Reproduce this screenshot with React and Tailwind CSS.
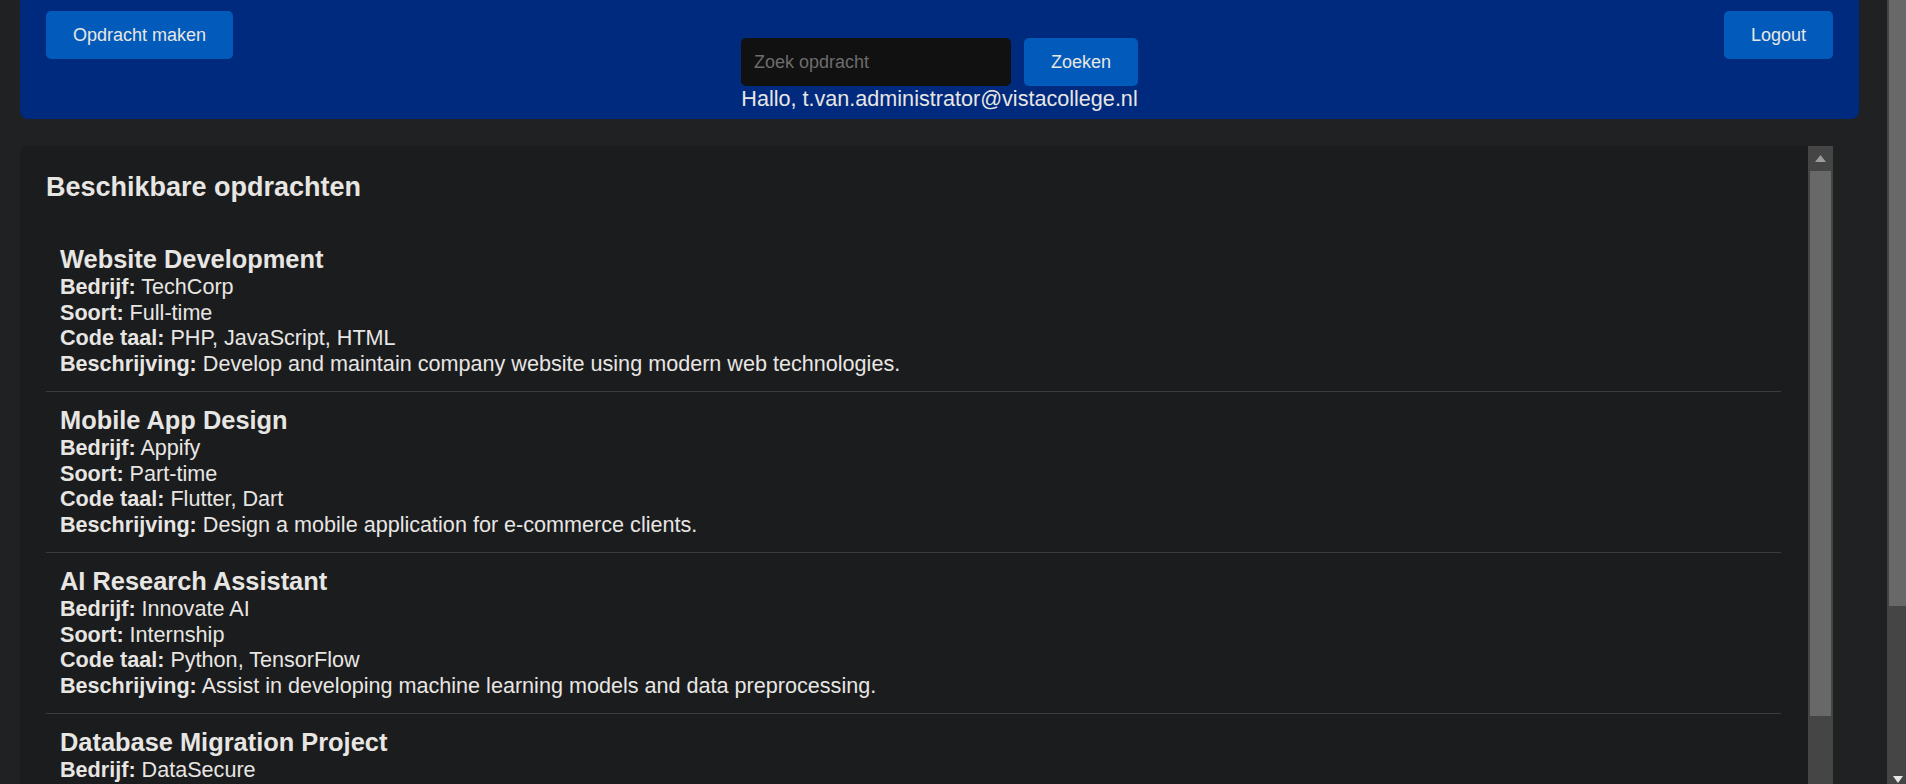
import React from 'react';

const opdrachten = [
  {
    titel: 'Website Development',
    bedrijf: 'TechCorp',
    soort: 'Full-time',
    taal: 'PHP, JavaScript, HTML',
    beschrijving: 'Develop and maintain company website using modern web technologies.',
  },
  {
    titel: 'Mobile App Design',
    bedrijf: 'Appify',
    soort: 'Part-time',
    taal: 'Flutter, Dart',
    beschrijving: 'Design a mobile application for e-commerce clients.',
  },
  {
    titel: 'AI Research Assistant',
    bedrijf: 'Innovate AI',
    soort: 'Internship',
    taal: 'Python, TensorFlow',
    beschrijving: 'Assist in developing machine learning models and data preprocessing.',
  },
  {
    titel: 'Database Migration Project',
    bedrijf: 'DataSecure',
    soort: 'Full-time',
    taal: 'SQL, PostgreSQL',
    beschrijving: 'Migrate legacy databases to a modern cloud environment.',
  },
];

function Field({ label, children }) {
  return (
    <p className="leading-[25.5px]">
      <strong className="font-bold">{label}:</strong> {children}
    </p>
  );
}

export default function App() {
  return (
    <div className="flex h-[784px] w-[1906px] overflow-hidden bg-[#1f2122] font-['Liberation_Sans',Arial,sans-serif] text-[21.6px] text-[#e8e6e3]">
      <div className="flex w-[1887px] flex-col pl-5">
        {/* Header */}
        <header className="grid h-[119px] w-[1839px] shrink-0 grid-cols-[1fr_auto_1fr] rounded-b-lg bg-[#002a7e] px-[26px] pt-[11px]">
          <div>
            <button className="h-12 rounded-[5px] bg-[#025bbb] px-[27px] text-[18px] text-[#e8e6e3]">
              Opdracht maken
            </button>
          </div>

          <div className="mt-[27px] flex flex-col items-center">
            <div className="flex gap-[13px]">
              <input
                type="text"
                placeholder="Zoek opdracht"
                className="h-12 w-[270px] rounded-[5px] bg-[#111111] pl-[13px] text-[18px] text-[#e8e6e3] outline-none placeholder:text-[#6d6d6d]"
              />
              <button className="h-12 w-[114px] rounded-[5px] bg-[#025bbb] text-[18px] text-[#e8e6e3]">
                Zoeken
              </button>
            </div>
            <p className="leading-[25px]">Hallo, t.van.administrator@vistacollege.nl</p>
          </div>

          <div className="flex justify-end">
            <button className="h-12 w-[109px] rounded-[5px] bg-[#025bbb] text-[18px] text-[#e8e6e3]">
              Logout
            </button>
          </div>
        </header>

        {/* Opdrachten panel */}
        <section className="mt-[27px] flex w-[1813px] flex-1 overflow-hidden rounded-tl-lg bg-[#1b1c1e]">
          <div className="flex-1 pl-[26px] pr-[27px] pt-[26px]">
            <h2 className="text-[27px] font-bold leading-[31px]">Beschikbare opdrachten</h2>
            <ul className="mt-[28px]">
              {opdrachten.map((o) => (
                <li key={o.titel} className="border-b border-[#3a3c3e] px-[14px] pb-[15px] pt-[14px]">
                  <h3 className="text-[25.4px] font-bold leading-[29px]">{o.titel}</h3>
                  <Field label="Bedrijf">{o.bedrijf}</Field>
                  <Field label="Soort">{o.soort}</Field>
                  <Field label="Code taal">{o.taal}</Field>
                  <Field label="Beschrijving">{o.beschrijving}</Field>
                </li>
              ))}
            </ul>
          </div>

          {/* panel scrollbar */}
          <div className="flex w-[25px] flex-col bg-[#454545]">
            <div className="flex h-[25px] items-center justify-center">
              <svg width="11" height="7" viewBox="0 0 11 7">
                <path d="M5.5 0 L11 7 L0 7 Z" fill="#9c9c9c" />
              </svg>
            </div>
            <div className="mx-[2px] h-[545px] bg-[#686868]" />
          </div>
        </section>
      </div>

      {/* page scrollbar */}
      <div className="flex w-[19px] flex-col bg-[#454545] pl-[2px]">
        <div className="h-[606px] bg-[#686868]" />
        <div className="flex flex-1 items-end justify-center pb-[1px]">
          <svg width="10" height="7" viewBox="0 0 10 7">
            <path d="M0 0 L10 0 L5 7 Z" fill="#e6e6e6" />
          </svg>
        </div>
      </div>
    </div>
  );
}
